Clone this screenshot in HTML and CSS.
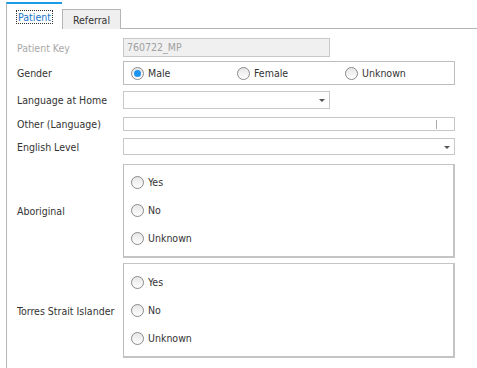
FILE: index.html
```html
<html>
<head>
    <title>Patient</title>
    <link rel="stylesheet" href="styles.css">
</head>
<body>
    <div class="tabs">
        <div class="tab active"><span class="focus">Patient</span></div>
        <div class="tab">Referral</div>
        <div class="tab-fill"></div>
    </div>
    <div class="panel">
        <div class="row row-key">
            <label class="disabled">Patient Key</label>
            <div class="field field-key">760722_MP</div>
        </div>
        <div class="row row-gender">
            <label>Gender</label>
            <div class="box gender">
                <span class="option"><span class="radio checked"></span>Male</span>
                <span class="option"><span class="radio"></span>Female</span>
                <span class="option"><span class="radio"></span>Unknown</span>
            </div>
        </div>
        <div class="row row-lang">
            <label>Language at Home</label>
            <div class="field select short"><span class="arrow"></span></div>
        </div>
        <div class="row row-other">
            <label>Other (Language)</label>
            <div class="field other"><span class="caret"></span></div>
        </div>
        <div class="row row-english">
            <label>English Level</label>
            <div class="field select"><span class="arrow"></span></div>
        </div>
        <div class="row row-abo">
            <label>Aboriginal</label>
            <div class="box group">
                <span class="option"><span class="radio"></span>Yes</span>
                <span class="option"><span class="radio"></span>No</span>
                <span class="option"><span class="radio"></span>Unknown</span>
            </div>
        </div>
        <div class="row row-tsi">
            <label>Torres Strait Islander</label>
            <div class="box group">
                <span class="option"><span class="radio"></span>Yes</span>
                <span class="option"><span class="radio"></span>No</span>
                <span class="option"><span class="radio"></span>Unknown</span>
            </div>
        </div>
    </div>
</body>
</html>
```
FILE: styles.css
```css
body {
    font-family: 'DejaVu Sans Condensed', 'DejaVu Sans', sans-serif;
    font-size: 10.5px;
    color: #333;
    background-color: #ffffff;
    margin: 0;
    padding: 2px 0 0 6px;
}

.tabs {
    display: flex;
    align-items: flex-end;
    height: 27px;
}

.tab {
    height: 20px;
    width: 59px;
    box-sizing: border-box;
    border: 1px solid #b5b5b5;
    border-bottom: none;
    background-color: #efefef;
    color: #333;
    display: flex;
    align-items: center;
    justify-content: center;
    padding-top: 1px;
}

.tab.active {
    height: 27px;
    width: 56px;
    background-color: #fff;
    border: none;
    border-top: 2px solid #1c9be6;
    border-left: 1px solid #b5b5b5;
    color: #1775c9;
    padding-top: 0;
}

.focus {
    outline: 1px dotted #333;
    outline-offset: 0;
    padding: 0 1px;
}

.tab-fill {
    flex: 1;
    border-bottom: 1px solid #b5b5b5;
}

.panel {
    border-left: 1px solid #b5b5b5;
    padding: 9px 0 10px 10px;
}

.row {
    display: flex;
    align-items: center;
}

.row label {
    width: 106px;
    flex-shrink: 0;
    line-height: 12px;
}

.row label.disabled {
    color: #a8a8a8;
}

.field {
    border: 1px solid #c8c8c8;
    box-sizing: border-box;
    width: 332px;
    position: relative;
}

.field-key {
    width: 207px;
    height: 19px;
    background-color: #f0f0f0;
    color: #a0a0a0;
    padding: 2px 3px;
}

.row-gender { margin-top: 4px; }
.row-lang { margin-top: 6px; }
.row-other { margin-top: 8px; }
.row-english { margin-top: 7px; }
.row-abo { margin-top: 9px; }
.row-tsi { margin-top: 5px; }

.box {
    border: 1px solid #bdbdbd;
    box-sizing: border-box;
    width: 332px;
}

.gender {
    height: 24px;
    display: grid;
    grid-template-columns: 106px 108px 1fr;
    align-items: center;
    padding-left: 7px;
}

.select {
    height: 18px;
}

.select.short {
    width: 207px;
}

.row-english .select {
    height: 17px;
}

.arrow {
    position: absolute;
    right: 4px;
    top: 7px;
    border-left: 3px solid transparent;
    border-right: 3px solid transparent;
    border-top: 3px solid #555;
}

.other {
    height: 14px;
}

.caret {
    position: absolute;
    right: 17px;
    top: 2px;
    width: 1px;
    height: 9px;
    background-color: #aaa;
}

.group {
    height: 94px;
    display: flex;
    flex-direction: column;
    justify-content: center;
    gap: 15px;
    padding-left: 7px;
    border-width: 1px 2px 2px 1px;
    border-color: #c4c4c4 #c4c4c4 #c4c4c4 #bdbdbd;
}

.row-tsi .group {
    height: 95px;
}

.option {
    display: flex;
    align-items: center;
    line-height: 13px;
}

.radio {
    width: 11px;
    height: 11px;
    border: 1px solid #8a8a8a;
    border-radius: 50%;
    background: linear-gradient(#e6e6e6, #ffffff);
    margin-right: 4px;
    position: relative;
}

.radio.checked::after {
    content: "";
    position: absolute;
    left: 2px;
    top: 2px;
    width: 7px;
    height: 7px;
    border-radius: 50%;
    background-color: #1b95f0;
}
```
